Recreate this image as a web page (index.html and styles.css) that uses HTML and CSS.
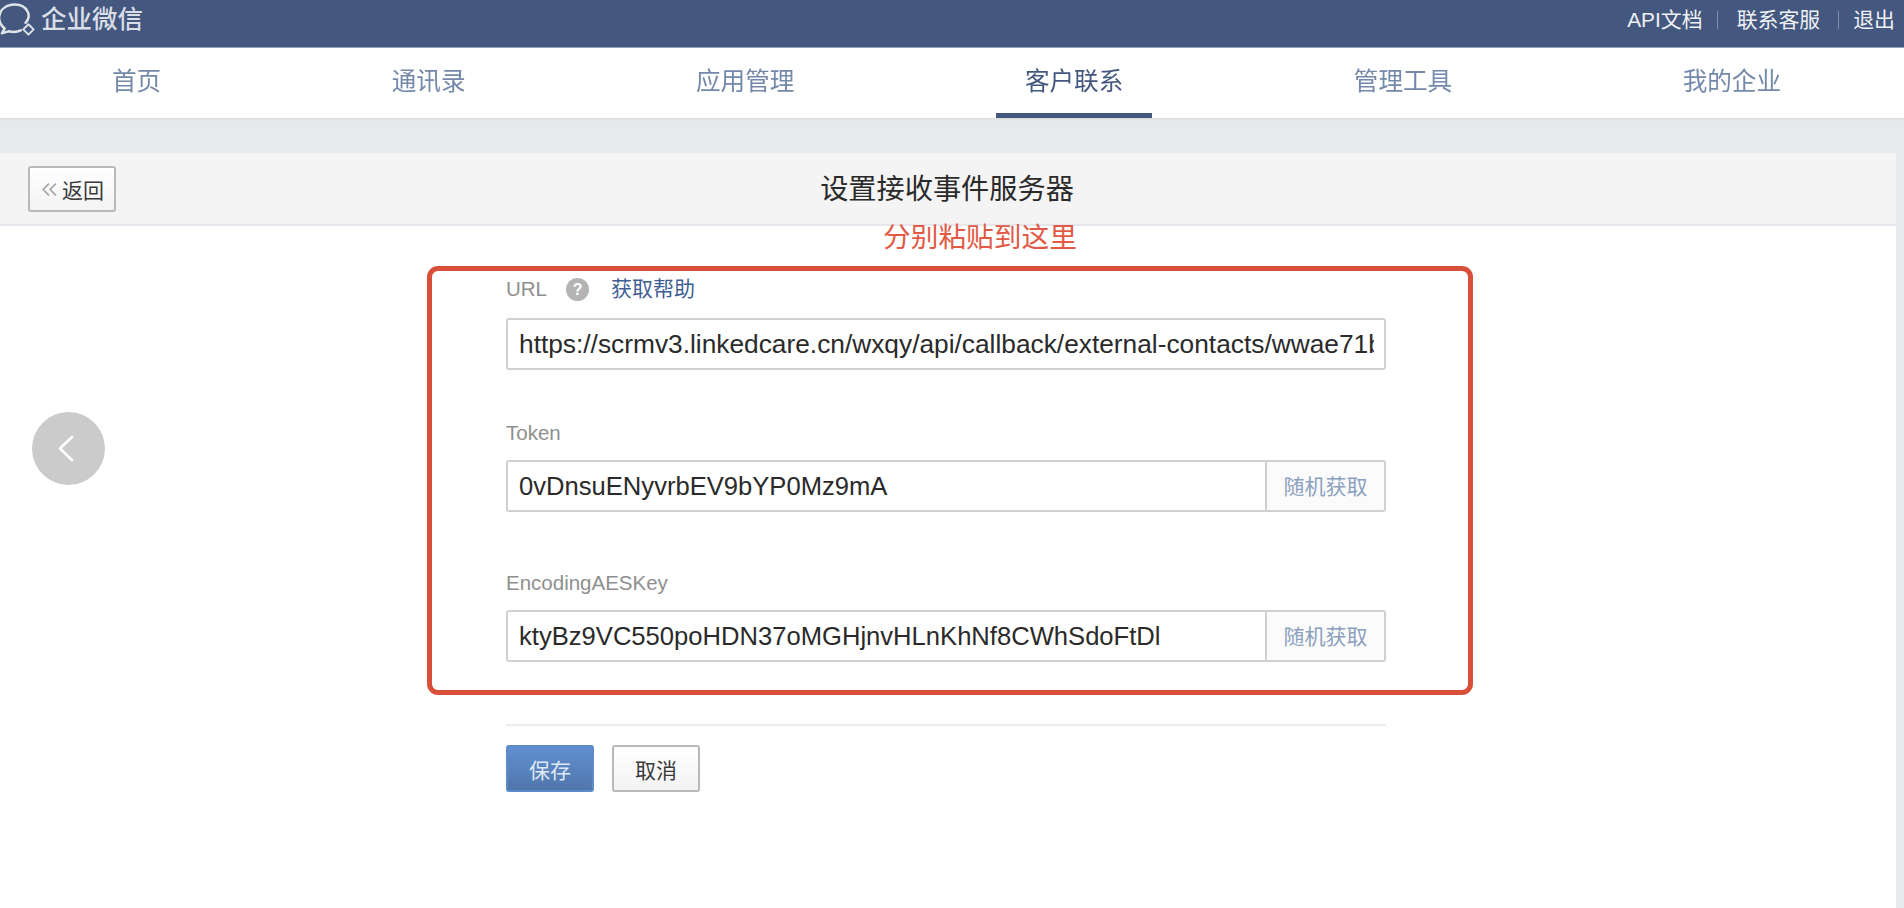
FILE: index.html
```html
<!DOCTYPE html>
<html lang="zh-CN">
<head>
<meta charset="utf-8">
<title>设置接收事件服务器</title>
<link rel="stylesheet" href="styles.css">
</head>
<body>
<div class="page">
  <header class="topbar">
    <div class="brand">
      <svg class="logo" viewBox="0 0 38 36" fill="none" stroke="#dfe3ea" stroke-linecap="round" stroke-linejoin="round">
        <path d="M27 22 C31 18 31 13 29 10 C26 4 19 2 12 3 C5 4 0 9 -1 16 C-1 21 1 25 5 28 L2 33 L9 31 C13 32 18 32 22 30" stroke-width="2.6"/>
        <path d="M30 23.5 L35.5 29 L30 34.5 L24.5 29 Z" stroke-width="2"/>
      </svg>
      <span class="brand-name">企业微信</span>
    </div>
    <nav class="toplinks">
      <a class="toplink">API文档</a><i class="sep sep-a"></i>
      <a class="toplink">联系客服</a><i class="sep sep-b"></i>
      <a class="toplink">退出</a>
    </nav>
  </header>
  <nav class="mainnav">
    <a class="navitem">首页</a>
    <a class="navitem">通讯录</a>
    <a class="navitem">应用管理</a>
    <a class="navitem active">客户联系</a>
    <a class="navitem">管理工具</a>
    <a class="navitem">我的企业</a>
  </nav>
  <main class="card">
    <div class="cardhead">
      <button class="btn back" type="button">
        <svg class="chev" viewBox="0 0 14 12" fill="none" stroke="#a0a0a0" stroke-width="1.4"><path d="M6.5 0.5 L1 6 L6.5 11.5"/><path d="M13 0.5 L7.5 6 L13 11.5"/></svg>返回
      </button>
      <h1 class="title">设置接收事件服务器</h1>
    </div>
    <form class="form">
      <div class="field first">
        <div class="label">URL
          <span class="help">?</span>
          <a class="helplink">获取帮助</a>
        </div>
        <div class="inputrow"><input class="input url" readonly value="https://scrmv3.linkedcare.cn/wxqy/api/callback/external-contacts/wwae71b8c3f0d2a1"></div>
      </div>
      <div class="field">
        <div class="label">Token</div>
        <div class="inputrow"><input class="input" readonly value="0vDnsuENyvrbEV9bYP0Mz9mA"><span class="rand">随机获取</span></div>
      </div>
      <div class="field">
        <div class="label">EncodingAESKey</div>
        <div class="inputrow"><input class="input" readonly value="ktyBz9VC550poHDN37oMGHjnvHLnKhNf8CWhSdoFtDl"><span class="rand">随机获取</span></div>
      </div>
      <div class="actions">
        <button class="btn primary" type="button">保存</button>
        <button class="btn" type="button">取消</button>
      </div>
    </form>
    <div class="note">分别粘贴到这里</div>
    <div class="redbox"></div>
    <button class="prev" type="button" aria-label="上一步">
      <svg viewBox="0 0 16 27" fill="none" stroke="#fff" stroke-width="2.6" stroke-linecap="round" stroke-linejoin="round"><path d="M14 2 L2 13.5 L14 25"/></svg>
    </button>
  </main>
</div>
</body>
</html>
```
FILE: styles.css
```css
* { box-sizing: border-box; }
html, body { margin: 0; height: 100%; overflow: hidden; background: #e8e9eb; }
body { font-family: "Liberation Sans", "Noto Sans CJK SC", sans-serif; }
.page { height: 908px; display: flex; flex-direction: column; filter: blur(0.5px); }

.topbar { height: 48px; flex: none; background: #44577e; border-bottom: 1px solid #8f9db8; display: flex; justify-content: space-between; align-items: center; padding: 0 9px 9px 0; color: #eef1f5; }
.brand { display: flex; align-items: center; gap: 5px; }
.logo { width: 36px; height: 36px; display: block; }
.brand-name { font-size: 25.5px; color: #d9dee7; line-height: 36px; font-weight: 500; }
.toplinks { display: flex; align-items: center; padding-top: 2px; }
.toplink { font-size: 20.9px; line-height: 36px; color: #eef1f5; }
.sep { width: 1px; height: 18px; background: #7f8eab; }
.sep-a { margin: 0 19px 0 14px; }
.sep-b { margin: 0 14px 0 18px; }

.mainnav { height: 70px; flex: none; background: #fff; display: flex; gap: 172.5px; padding-left: 83px; box-shadow: 0 1px 2px #d4d5d7; position: relative; }
.navitem { padding: 0 29px; font-size: 24.6px; line-height: 68px; color: #7488a9; height: 70px; border-bottom: 5px solid transparent; }
.navitem.active { color: #44577e; border-bottom-color: #44577e; }

.card { flex: 1; margin: 35px 8px 0 0; background: #fff; border-radius: 0 8px 0 0; position: relative; }
.cardhead { height: 73px; background: #f4f4f4; border-bottom: 2px solid #e6e7ec; position: relative; display: flex; align-items: center; justify-content: center; padding: 1px 2px 0 0; }
.title { margin: 0; font-size: 28.2px; font-weight: 400; color: #2a2a2a; line-height: 40px; }

.btn { width: 88px; height: 47px; border: 2px solid #b9b9b9; border-radius: 3px; background: linear-gradient(#fff, #f3f3f3); font: 21px "Liberation Sans", "Noto Sans CJK SC", sans-serif; color: #3a3a3a; padding: 0; }
.back { position: absolute; left: 28px; top: 13px; height: 46px; display: flex; align-items: center; justify-content: center; gap: 5px; padding-left: 2px; }
.chev { width: 15px; height: 13px; display: block; }
.primary { background: linear-gradient(#6090cf, #5076ac); border-color: #5d8bca; color: #dfe8f4; margin-right: 18px; }

.form { width: 880px; margin: 0 0 0 506px; padding-top: 50px; }
.label { font-size: 20.5px; line-height: 26px; color: #8f8f8f; display: flex; align-items: center; height: 26px; margin-bottom: 14px; }
.first .label { margin-bottom: 16px; }
.field { margin-bottom: 58px; }
.field.first { margin-bottom: 50px; }
.help { width: 23px; height: 23px; border-radius: 50%; background: #b4b4b4; color: #fff; font-size: 16px; font-weight: 700; line-height: 23px; text-align: center; margin: 0 22px 0 19px; }
.helplink { font-size: 21px; color: #3f5f94; }
.inputrow { display: flex; height: 52px; border: 2px solid #d0d0d0; border-radius: 3px; background: #fff; }
.input { flex: 1; min-width: 0; border: 0; outline: 0; padding: 0 10px 0 11px; height: 100%; background: transparent; font: 25.6px "Liberation Sans", sans-serif; color: #2a2a2a; }
.input.url { font-size: 26.3px; }
.rand { width: 119px; flex: none; border-left: 2px solid #d0d0d0; background: #fbfbfb; text-align: center; font-size: 21px; line-height: 50px; color: #8ba0bf; }
.actions { border-top: 2px solid #ececf0; margin-top: 62px; padding-top: 19px; display: flex; }

.note { position: absolute; left: 883px; top: 65px; font-size: 27.7px; line-height: 40px; color: #e25a45; white-space: nowrap; }
.redbox { position: absolute; left: 427px; top: 113px; width: 1046px; height: 429px; border: 5px solid #d9503a; border-radius: 11px; pointer-events: none; }
.prev { position: absolute; left: 32px; top: 259px; width: 73px; height: 73px; border: 0; padding: 0; border-radius: 50%; background: #cbcbcb; display: flex; align-items: center; justify-content: center; }
.prev svg { width: 16px; height: 27px; margin-left: -6px; display: block; }
```
